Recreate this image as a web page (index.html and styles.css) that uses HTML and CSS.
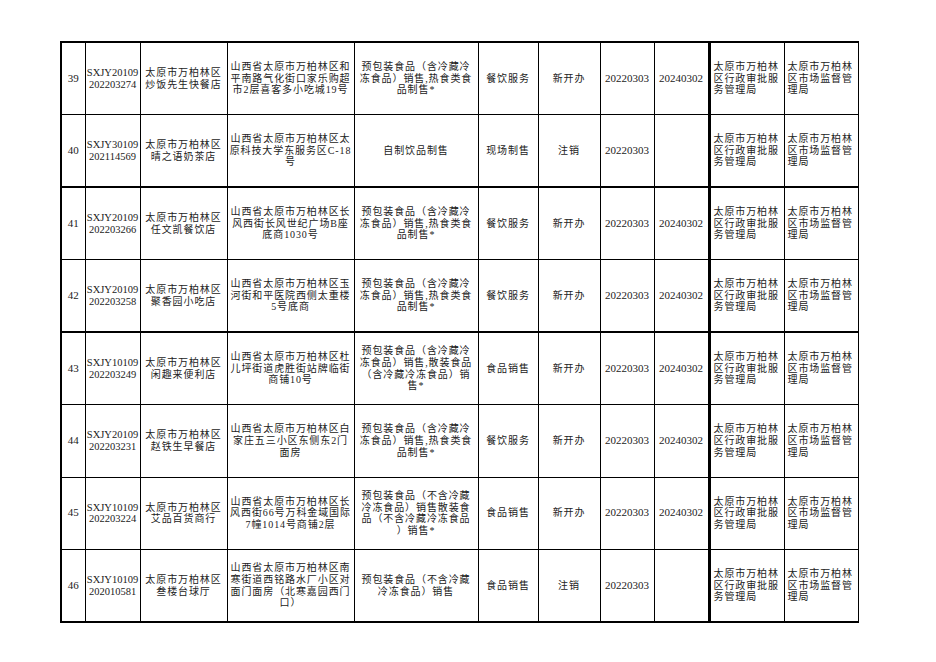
FILE: index.html
```html
<!DOCTYPE html>
<html lang="zh-CN">
<head>
<meta charset="utf-8">
<title>许可信息</title>
<link rel="stylesheet" href="styles.css">
</head>
<body>
<div class="sheet">
<table class="grid">
<colgroup>
<col class="c-num"><col class="c-code"><col class="c-name"><col class="c-addr"><col class="c-scope"><col class="c-cat"><col class="c-type"><col class="c-date"><col class="c-end"><col class="c-auth"><col class="c-sup">
</colgroup>
<tbody>
<tr class="row brk">
<td class="n">39</td><td class="n code">SXJY20109<br>202203274</td><td>太原市万柏林区<br>炒饭先生快餐店</td>
<td>山西省太原市万柏林区和<br>平南路气化街口家乐购超<br>市2层喜客多小吃城19号</td>
<td>预包装食品（含冷藏冷<br>冻食品）销售,热食类食<br>品制售*</td>
<td>餐饮服务</td><td>新开办</td><td class="n">20220303</td><td class="n">20240302</td>
<td class="left auth">太原市万柏林<br>区行政审批服<br>务管理局</td><td class="left">太原市万柏林<br>区市场监督管<br>理局</td>
</tr>
<tr class="row">
<td class="n">40</td><td class="n code">SXJY30109<br>202114569</td><td>太原市万柏林区<br>晴之语奶茶店</td>
<td>山西省太原市万柏林区太<br>原科技大学东服务区C-18<br>号</td>
<td>自制饮品制售</td>
<td>现场制售</td><td>注销</td><td class="n">20220303</td><td class="n"></td>
<td class="left auth">太原市万柏林<br>区行政审批服<br>务管理局</td><td class="left">太原市万柏林<br>区市场监督管<br>理局</td>
</tr>
<tr class="row brk">
<td class="n">41</td><td class="n code">SXJY20109<br>202203266</td><td>太原市万柏林区<br>任文凯餐饮店</td>
<td>山西省太原市万柏林区长<br>风西街长风世纪广场B座<br>底商1030号</td>
<td>预包装食品（含冷藏冷<br>冻食品）销售,热食类食<br>品制售*</td>
<td>餐饮服务</td><td>新开办</td><td class="n">20220303</td><td class="n">20240302</td>
<td class="left auth">太原市万柏林<br>区行政审批服<br>务管理局</td><td class="left">太原市万柏林<br>区市场监督管<br>理局</td>
</tr>
<tr class="row">
<td class="n">42</td><td class="n code">SXJY20109<br>202203258</td><td>太原市万柏林区<br>聚香园小吃店</td>
<td>山西省太原市万柏林区玉<br>河街和平医院西侧太重楼<br>5号底商</td>
<td>预包装食品（含冷藏冷<br>冻食品）销售,热食类食<br>品制售*</td>
<td>餐饮服务</td><td>新开办</td><td class="n">20220303</td><td class="n">20240302</td>
<td class="left auth">太原市万柏林<br>区行政审批服<br>务管理局</td><td class="left">太原市万柏林<br>区市场监督管<br>理局</td>
</tr>
<tr class="row brk">
<td class="n">43</td><td class="n code">SXJY10109<br>202203249</td><td>太原市万柏林区<br>闲趣来便利店</td>
<td>山西省太原市万柏林区杜<br>儿坪街道虎胜街站牌临街<br>商铺10号</td>
<td>预包装食品（含冷藏冷<br>冻食品）销售,散装食品<br>（含冷藏冷冻食品）销<br>售*</td>
<td>食品销售</td><td>新开办</td><td class="n">20220303</td><td class="n">20240302</td>
<td class="left auth">太原市万柏林<br>区行政审批服<br>务管理局</td><td class="left">太原市万柏林<br>区市场监督管<br>理局</td>
</tr>
<tr class="row">
<td class="n">44</td><td class="n code">SXJY20109<br>202203231</td><td>太原市万柏林区<br>赵铁生早餐店</td>
<td>山西省太原市万柏林区白<br>家庄五三小区东侧东2门<br>面房</td>
<td>预包装食品（含冷藏冷<br>冻食品）销售,热食类食<br>品制售*</td>
<td>餐饮服务</td><td>新开办</td><td class="n">20220303</td><td class="n">20240302</td>
<td class="left auth">太原市万柏林<br>区行政审批服<br>务管理局</td><td class="left">太原市万柏林<br>区市场监督管<br>理局</td>
</tr>
<tr class="row">
<td class="n">45</td><td class="n code">SXJY10109<br>202203224</td><td>太原市万柏林区<br>艾品百货商行</td>
<td>山西省太原市万柏林区长<br>风西街66号万科金域国际<br>7幢1014号商铺2层</td>
<td>预包装食品（不含冷藏<br>冷冻食品）销售散装食<br>品（不含冷藏冷冻食品<br>）销售*</td>
<td>食品销售</td><td>新开办</td><td class="n">20220303</td><td class="n">20240302</td>
<td class="left auth">太原市万柏林<br>区行政审批服<br>务管理局</td><td class="left">太原市万柏林<br>区市场监督管<br>理局</td>
</tr>
<tr class="row">
<td class="n">46</td><td class="n code">SXJY10109<br>202010581</td><td>太原市万柏林区<br>叁楼台球厅</td>
<td>山西省太原市万柏林区南<br>寒街道西铭路水厂小区对<br>面门面房（北寒嘉园西门<br>口）</td>
<td>预包装食品（不含冷藏<br>冷冻食品）销售</td>
<td>食品销售</td><td>注销</td><td class="n">20220303</td><td class="n"></td>
<td class="left auth">太原市万柏林<br>区行政审批服<br>务管理局</td><td class="left">太原市万柏林<br>区市场监督管<br>理局</td>
</tr>
</tbody>
</table>
</div>
</body>
</html>
```

FILE: styles.css
```css
html, body {
  margin: 0;
  padding: 0;
  background: #ffffff;
}

body {
  font-family: "Liberation Serif", "Noto Sans CJK SC", serif;
  font-size: 10px;
  color: #222222;
}

.sheet {
  padding: 41px 0 0 60px;
}

.grid {
  border-collapse: collapse;
  table-layout: fixed;
  width: 797px;
  border-left: 2px solid #000;
  border-top: 2px solid #000;
  border-bottom: 2px solid #000;
}

.c-num { width: 24px; }
.c-code { width: 55px; }
.c-name { width: 87px; }
.c-addr { width: 127px; }
.c-scope { width: 124px; }
.c-cat { width: 60px; }
.c-type { width: 62px; }
.c-date { width: 54px; }
.c-end { width: 55px; }
.c-auth { width: 75px; }
.c-sup { width: 74px; }

.row {
  height: 72.5px;
}

.grid td {
  border: 1px solid #000;
  padding: 0 1px;
  text-align: center;
  vertical-align: middle;
  line-height: 11.7px;
  letter-spacing: 0.9px;
  white-space: nowrap;
  overflow: hidden;
}

.grid td.n {
  font-size: 11px;
  letter-spacing: 0;
}

.grid td.code {
  padding: 0;
  font-size: 10.5px;
}

.brk td {
  border-top: 2px solid #000;
}

.grid td.left {
  text-align: left;
  padding-left: 3px;
}

.grid td.auth {
  border-left: 3px solid #000;
}
```
